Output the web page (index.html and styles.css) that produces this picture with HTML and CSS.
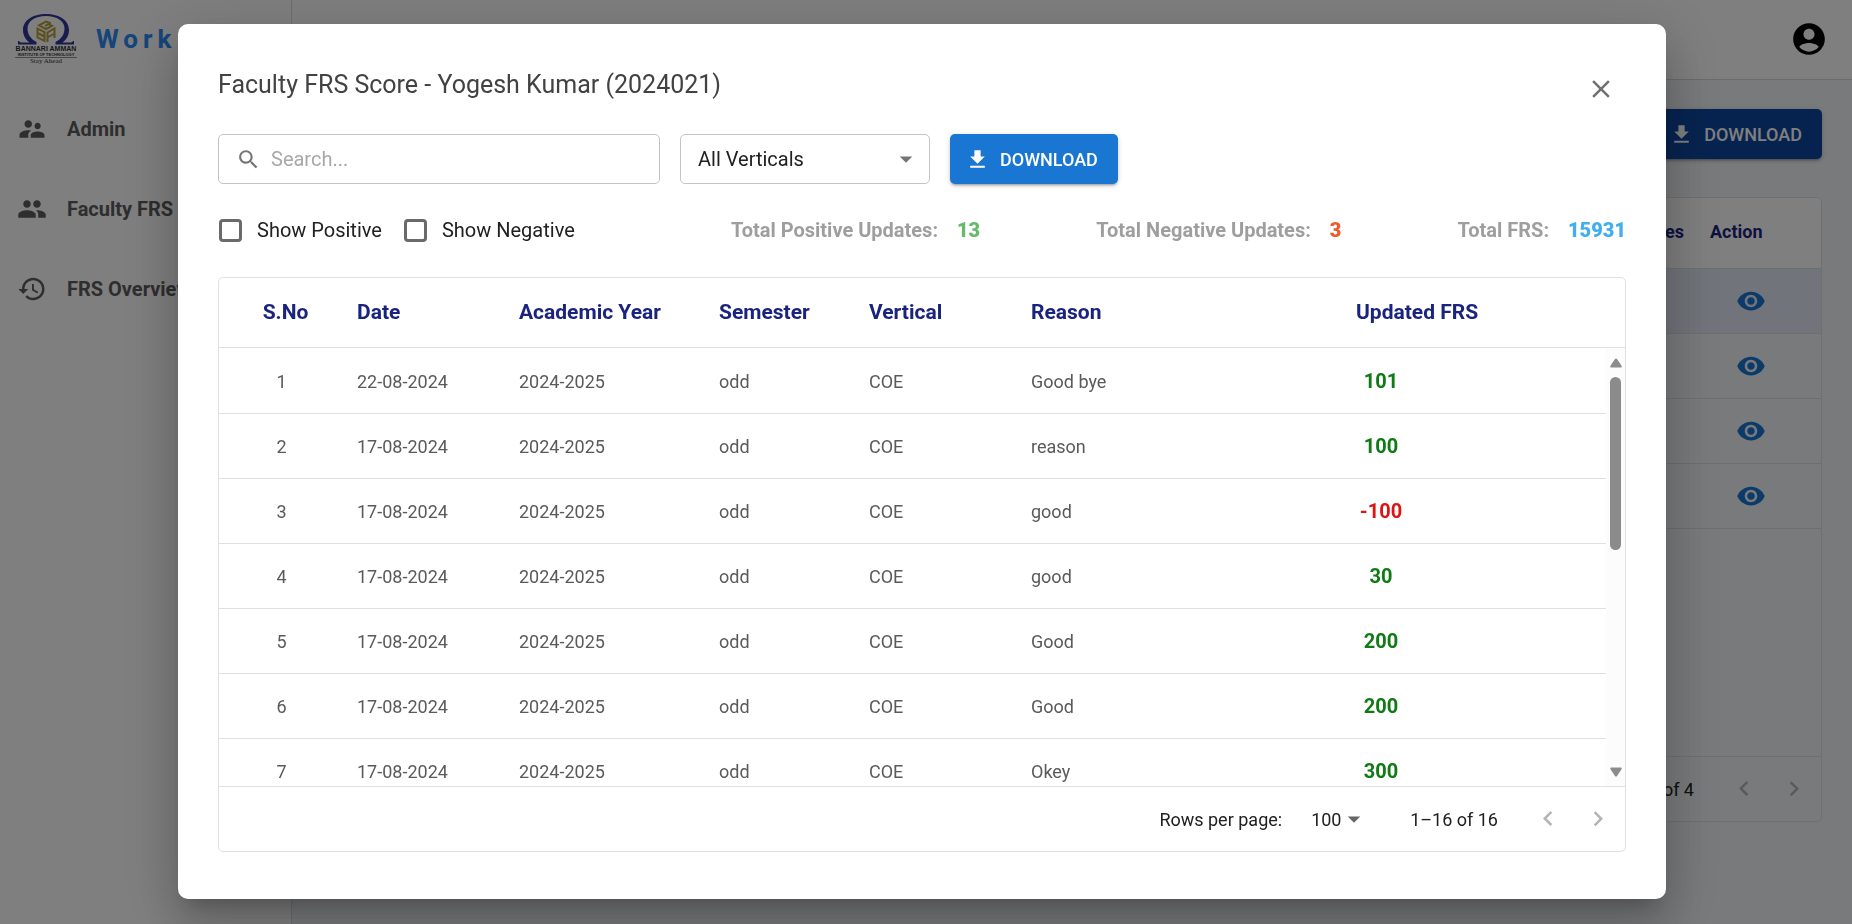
FILE: index.html
```html
<!DOCTYPE html>
<html lang="en">
<head>
<meta charset="utf-8">
<title>Faculty FRS</title>
<link rel="stylesheet" href="styles.css">
</head>
<body>
<svg class="defs" aria-hidden="true">
  <symbol id="i-download" viewBox="0 0 24 24"><path d="M19 9h-4V3H9v6H5l7 7 7-7zM5 18v2h14v-2H5z"/></symbol>
  <symbol id="i-eye" viewBox="0 0 24 24"><path d="M12 4.500C7 4.500 2.730 7.610 1 12c1.730 4.390 6 7.500 11 7.500s9.270-3.110 11-7.500c-1.730-4.390-6-7.500-11-7.500zM12 17c-2.760 0-5-2.240-5-5s2.240-5 5-5 5 2.240 5 5-2.240 5-5 5zm0-8c-1.660 0-3 1.340-3 3s1.340 3 3 3 3-1.340 3-3-1.340-3-3-3z"/></symbol>
  <symbol id="i-left" viewBox="0 0 24 24"><path d="M15.410 16.090l-4.580-4.590 4.580-4.590L14 5.500l-6 6 6 6z"/></symbol>
  <symbol id="i-right" viewBox="0 0 24 24"><path d="M8.590 16.340l4.580-4.590-4.580-4.590L10 5.750l6 6-6 6z"/></symbol>
  <symbol id="i-drop" viewBox="0 0 24 24"><path d="M7 10l5 5 5-5z"/></symbol>
</svg>

<div class="app">
  <aside class="sidebar">
    <div class="brand">
      <svg class="logo" viewBox="0 0 62 51" role="img" aria-label="Bannari Amman Institute of Technology">
        <path fill="#33369a" d="M3 27v3.500h18.500v-2.500C15.500 25 12.500 20 12.500 14.500 12.500 7 20 2 31 2s18.500 5 18.500 12.500C49.500 20 46.500 25 40.500 28v2.500H59V27h-1c-.500 1.300-1.500 1.500-4 1.500h-6.500c4.200-3 6.500-7.500 6.500-12.500C54 6.500 44.500 0 31 0S8 6.500 8 16c0 5 2.300 9.500 6.500 12.500H8c-2.500 0-3.500-.200-4-1.500z"/>
        <g fill="none" stroke="#b5a03c" stroke-width="2">
          <path d="M36 9.500L31 7.500l-7 3.800 7 3.700 6-3.200-3.500-1.800-3.500 1.800"/>
          <path d="M22.500 14.500v9l7 3.500v-9zM22.500 19l7 3.500"/>
          <path d="M32.500 28v-9.500l7-4V24M32.500 23.500l7-4"/>
        </g>
        <text class="logo-name" x="31" y="37" text-anchor="middle">BANNARI AMMAN</text>
        <text class="logo-sub" x="31" y="42" text-anchor="middle">INSTITUTE OF TECHNOLOGY</text>
        <path stroke="#222" stroke-width=".5" d="M0 43.500h62"/>
        <text class="logo-motto" x="31" y="49" text-anchor="middle">Stay Ahead</text>
      </svg>
      <span class="brand-name">Work</span>
    </div>
    <nav class="nav">
      <a href="#admin"><svg viewBox="0 0 24 24"><path d="M16.500 12c1.380 0 2.490-1.120 2.490-2.500S17.880 7 16.500 7C15.120 7 14 8.120 14 9.500s1.120 2.500 2.500 2.500zM9 11c1.660 0 2.990-1.340 2.990-3S10.660 5 9 5C7.340 5 6 6.340 6 8s1.340 3 3 3zm7.500 3c-1.830 0-5.500.920-5.500 2.750V19h11v-2.250c0-1.830-3.670-2.750-5.500-2.750zM9 13c-2.330 0-7 1.170-7 3.500V19h7v-2.250c0-.850.330-2.340 2.370-3.470C10.500 13.100 9.660 13 9 13z"/></svg>Admin</a>
      <a href="#faculty"><svg viewBox="0 0 24 24"><path d="M16 11c1.660 0 2.990-1.340 2.990-3S17.660 5 16 5c-1.660 0-3 1.340-3 3s1.340 3 3 3zm-8 0c1.660 0 2.990-1.340 2.990-3S9.660 5 8 5C6.340 5 5 6.340 5 8s1.340 3 3 3zm0 2c-2.330 0-7 1.170-7 3.500V19h14v-2.500c0-2.330-4.670-3.500-7-3.500zm8 0c-.290 0-.620.020-.970.050 1.160.840 1.970 1.970 1.970 3.450V19h6v-2.500c0-2.330-4.670-3.500-7-3.500z"/></svg>Faculty FRS</a>
      <a href="#overview"><svg viewBox="0 0 24 24"><path d="M13 3c-4.970 0-9 4.030-9 9H1l3.890 3.890.070.140L9 12H6c0-3.870 3.130-7 7-7s7 3.130 7 7-3.130 7-7 7c-1.930 0-3.680-.790-4.940-2.060l-1.420 1.420C8.270 19.990 10.510 21 13 21c4.970 0 9-4.030 9-9s-4.030-9-9-9zm-1 5v5l4.280 2.540.720-1.210-3.500-2.080V8H12z"/></svg>FRS Overview</a>
    </nav>
  </aside>
  <div class="page">
    <header class="topbar">
      <button class="account" aria-label="Account"><svg viewBox="0 0 24 24"><path d="M12 2C6.480 2 2 6.480 2 12s4.480 10 10 10 10-4.480 10-10S17.520 2 12 2zm0 3.500c1.930 0 3.500 1.570 3.500 3.500s-1.570 3.500-3.500 3.500S8.500 10.930 8.500 9 10.070 5.500 12 5.500zM12 20c-2.300 0-4.600-1.100-6.100-2.900C6 15.500 10 14.500 12 14.500s6 1 6.100 2.600C16.600 18.900 14.300 20 12 20z"/></svg></button>
    </header>
    <main class="main">
      <button class="btn btn-dark"><svg><use href="#i-download"/></svg>DOWNLOAD</button>
      <section class="card">
        <table class="back-table">
          <thead><tr><th>Scores</th><th class="act">Action</th></tr></thead>
          <tbody>
            <tr class="hovered"><td></td><td class="act"><button aria-label="View"><svg><use href="#i-eye"/></svg></button></td></tr>
            <tr><td></td><td class="act"><button aria-label="View"><svg><use href="#i-eye"/></svg></button></td></tr>
            <tr><td></td><td class="act"><button aria-label="View"><svg><use href="#i-eye"/></svg></button></td></tr>
            <tr><td></td><td class="act"><button aria-label="View"><svg><use href="#i-eye"/></svg></button></td></tr>
          </tbody>
        </table>
        <footer class="pager">
          <span class="range">1–4 of 4</span>
          <button aria-label="Previous page"><svg><use href="#i-left"/></svg></button>
          <button aria-label="Next page"><svg><use href="#i-right"/></svg></button>
        </footer>
      </section>
    </main>
  </div>
</div>

<div class="overlay">
  <div class="dialog" role="dialog" aria-labelledby="dlg-title">
    <div class="dialog-head">
      <h2 id="dlg-title">Faculty FRS Score - Yogesh Kumar (2024021)</h2>
      <button class="close" aria-label="Close"><svg viewBox="0 0 24 24"><path d="M19 6.410L17.590 5 12 10.590 6.410 5 5 6.410 10.590 12 5 17.590 6.410 19 12 13.410 17.590 19 19 17.590 13.410 12z"/></svg></button>
    </div>
    <div class="tools">
      <label class="search"><svg viewBox="0 0 24 24"><path d="M15.500 14h-.790l-.280-.270C15.410 12.590 16 11.110 16 9.500 16 5.910 13.090 3 9.500 3S3 5.910 3 9.500 5.910 16 9.500 16c1.610 0 3.090-.590 4.230-1.570l.270.280v.790l5 4.990L20.490 19l-4.990-5zm-6 0C7.010 14 5 11.990 5 9.500S7.010 5 9.500 5 14 7.010 14 9.500 11.990 14 9.500 14z"/></svg><input type="text" placeholder="Search..." aria-label="Search"></label>
      <div class="select"><select aria-label="Vertical"><option>All Verticals</option></select><svg><use href="#i-drop"/></svg></div>
      <button class="btn"><svg><use href="#i-download"/></svg>DOWNLOAD</button>
    </div>
    <div class="summary">
      <div class="checks">
        <label><input type="checkbox">Show Positive</label>
        <label><input type="checkbox">Show Negative</label>
      </div>
      <p>Total Positive Updates: <b class="c-green">13</b></p>
      <p>Total Negative Updates: <b class="c-orange">3</b></p>
      <p>Total FRS: <b class="c-blue">15931</b></p>
    </div>
    <div class="grid">
      <table class="records">
        <thead><tr><th>S.No</th><th>Date</th><th>Academic Year</th><th>Semester</th><th>Vertical</th><th>Reason</th><th>Updated FRS</th></tr></thead>
        <tbody>
          <tr><td>1</td><td>22-08-2024</td><td>2024-2025</td><td>odd</td><td>COE</td><td>Good bye</td><td><b class="plus">101</b></td></tr>
          <tr><td>2</td><td>17-08-2024</td><td>2024-2025</td><td>odd</td><td>COE</td><td>reason</td><td><b class="plus">100</b></td></tr>
          <tr><td>3</td><td>17-08-2024</td><td>2024-2025</td><td>odd</td><td>COE</td><td>good</td><td><b class="minus">-100</b></td></tr>
          <tr><td>4</td><td>17-08-2024</td><td>2024-2025</td><td>odd</td><td>COE</td><td>good</td><td><b class="plus">30</b></td></tr>
          <tr><td>5</td><td>17-08-2024</td><td>2024-2025</td><td>odd</td><td>COE</td><td>Good</td><td><b class="plus">200</b></td></tr>
          <tr><td>6</td><td>17-08-2024</td><td>2024-2025</td><td>odd</td><td>COE</td><td>Good</td><td><b class="plus">200</b></td></tr>
          <tr><td>7</td><td>17-08-2024</td><td>2024-2025</td><td>odd</td><td>COE</td><td>Okey</td><td><b class="plus">300</b></td></tr>
        </tbody>
      </table>
      <div class="scrollbar" aria-hidden="true">
        <svg viewBox="0 0 12 10"><path d="M6 0.500Q6.600 0.500 7 1L11.700 8Q12 9.500 11 9.500H1Q0 9.500 .300 8L5 1Q5.400 0.500 6 0.500z"/></svg>
        <i class="thumb"></i>
        <svg class="down" viewBox="0 0 12 10"><path d="M6 9.500Q6.600 9.500 7 9L11.700 2Q12 .500 11 .500H1Q0 .500 .300 2L5 9Q5.400 9.500 6 9.500z"/></svg>
      </div>
      <footer class="pager">
        <label for="rpp">Rows per page:</label>
        <div class="rpp"><select id="rpp"><option>100</option></select><svg><use href="#i-drop"/></svg></div>
        <span class="range">1–16 of 16</span>
        <button aria-label="Previous page"><svg><use href="#i-left"/></svg></button>
        <button aria-label="Next page"><svg><use href="#i-right"/></svg></button>
      </footer>
    </div>
  </div>
</div>
</body>
</html>
```
FILE: styles.css
```css
* { box-sizing: border-box; }
body { margin: 0; font-family: Roboto, "Liberation Sans", sans-serif; font-size: 18px; color: #212121; background: #fff; }
svg { display: block; fill: currentColor; flex: none; }
.defs { position: absolute; width: 0; height: 0; }
button { display: block; font: inherit; color: inherit; border: 0; background: none; padding: 0; cursor: pointer; }
select, input { font: inherit; color: inherit; }
h2, p { margin: 0; }

/* Page behind the dialog */
.app { display: flex; height: 100vh; overflow: hidden; }
.sidebar { width: 292px; flex: none; border-right: 1px solid #dcdcdc; background: #fff; }
.brand { display: flex; align-items: center; gap: 19px; height: 80px; padding: 0 0 2px 15px; }
.logo { width: 62px; height: 51px; }
.logo-name { font: bold 7px "Liberation Sans", sans-serif; fill: #333; }
.logo-sub { font: bold 4px "Liberation Sans", sans-serif; fill: #333; }
.logo-motto { font: 7px "Liberation Serif", serif; fill: #333; }
.brand-name { font-size: 26px; font-weight: 700; letter-spacing: 5px; color: #2a8af6; }
.nav { display: flex; flex-direction: column; gap: 20px; padding: 19px 0 0 17px; }
.nav a { display: flex; align-items: center; gap: 20px; height: 60px; font-size: 20px; font-weight: 700; color: #5c5c5c; text-decoration: none; white-space: nowrap; }
.nav svg { width: 30px; height: 30px; }
.page { flex: 1; display: flex; flex-direction: column; background: #f2f4f8; }
.topbar { height: 80px; display: flex; justify-content: flex-end; align-items: center; padding: 0 24px 2px 0; background: #fff; border-bottom: 1px solid #d5d8dd; }
.account { color: #000; }
.account svg { width: 38px; height: 38px; }
.main { flex: 1; display: flex; flex-direction: column; align-items: flex-end; gap: 38px; padding: 29px 30px 102px; }
.card { flex: 1; align-self: stretch; display: flex; flex-direction: column; border: 1px solid #e0e0e0; border-radius: 5px; background: #f3f5f8; overflow: hidden; }
.back-table { width: 100%; border-collapse: collapse; }
.back-table tr { height: 65px; border-bottom: 1px solid #dcdddf; }
.back-table thead tr { height: 70px; background: #fff; }
.back-table th { text-align: right; padding: 0 13px 2px; font-weight: 700; color: #1a237e; }
.back-table .act { width: 124px; text-align: left; }
.back-table td { padding: 0; }
.back-table td.act { padding-left: 39px; color: #1976d2; }
.back-table .hovered { background: #e2e9f5; }
.back-table svg { width: 30px; height: 30px; }
.card .pager { margin-top: auto; }

/* Buttons and paging */
.btn { display: flex; align-items: center; gap: 10px; height: 50px; padding: 0 20px 0 15px; border-radius: 5px; background: #1976d2; color: #fff; font-size: 18px; font-weight: 500; box-shadow: 0 3px 2px -2px rgba(0,0,0,.2), 0 2px 3px rgba(0,0,0,.14), 0 1px 6px rgba(0,0,0,.12); }
.btn svg { width: 25px; height: 25px; }
.btn-dark { background: #0d47a1; }
.pager { display: flex; align-items: center; justify-content: flex-end; height: 65px; padding-right: 12px; border-top: 1px solid #e0e0e0; }
.pager button { width: 30px; margin-right: 20px; color: #b4b4b4; }
.pager button:last-child { margin-right: 0; }
.pager button svg { width: 30px; height: 30px; }
.range { margin-right: 35px; }
.rpp { position: relative; margin: 0 45px 0 24px; }
.rpp select, .select select { appearance: none; border: 0; background: transparent; outline: 0; }
.rpp select { width: 59px; padding: 0 0 0 5px; }
.rpp svg { position: absolute; right: -4px; top: 50%; width: 30px; height: 30px; margin-top: -15px; color: #666; pointer-events: none; }

/* Dialog */
.overlay { position: fixed; inset: 0; display: flex; padding: 24px 186px 25px 178px; background: rgba(0,0,0,.5); }
.dialog { flex: 1; display: flex; flex-direction: column; padding: 40px 40px 47px; border-radius: 10px; background: #fff; box-shadow: 0 14px 19px -9px rgba(0,0,0,.2), 0 30px 48px 4px rgba(0,0,0,.14), 0 11px 58px 10px rgba(0,0,0,.12); }
.dialog-head { display: flex; justify-content: space-between; align-items: flex-start; }
.dialog-head h2 { font-size: 25px; line-height: 42px; font-weight: 400; color: #424242; }
.close { padding: 10px; color: #707070; }
.close svg { width: 30px; height: 30px; }
.tools { display: flex; gap: 20px; margin-top: 20px; font-size: 20px; }
.search { display: flex; align-items: center; gap: 10px; width: 442px; height: 50px; padding: 0 17px; border: 1px solid #c4c4c4; border-radius: 5px; }
.search svg { width: 25px; height: 25px; color: #757575; }
.search input { flex: 1; min-width: 0; border: 0; outline: 0; padding: 0; background: none; }
.search input::placeholder { color: #a8a8a8; opacity: 1; }
.select { position: relative; width: 250px; }
.select select { width: 100%; height: 50px; padding: 0 17px; border: 1px solid #c4c4c4; border-radius: 5px; }
.select svg { position: absolute; right: 9px; top: 10px; width: 30px; height: 30px; color: #757575; pointer-events: none; }
.summary { display: flex; align-items: center; justify-content: space-between; height: 52px; margin: 20px 0 21px; font-size: 20px; white-space: nowrap; }
.checks { display: flex; gap: 21px; padding-right: 40px; }
.checks label { display: flex; align-items: center; gap: 15px; padding-left: 1px; }
.checks input { appearance: none; width: 23px; height: 23px; margin: 0; border: 3px solid #6a6a6a; border-radius: 4px; }
.summary p { font-weight: 700; color: #9e9e9e; }
.summary b { margin-left: 14px; }
.c-green { color: #66bb6a; }
.c-orange { color: #f1592a; }
.c-blue { color: #42aeec; }

/* Records grid */
.grid { position: relative; flex: 1; min-height: 0; display: flex; flex-direction: column; border: 1px solid #e0e0e0; border-radius: 5px; }
.records { flex: 1; min-height: 0; display: flex; flex-direction: column; color: #5a5a5a; }
.records thead, .records tbody { display: block; }
.records tbody { flex: 1; min-height: 0; padding-top: 1px; overflow: hidden; }
.records tr { display: grid; grid-template-columns: 125fr 162fr 200fr 150fr 162fr 325fr 282fr; align-items: center; height: 65px; border-bottom: 1px solid #e0e0e0; }
.records thead tr { height: 70px; }
.records th { padding: 0 13px 2px; text-align: left; font-size: 21px; font-weight: 700; color: #1a237e; white-space: nowrap; }
.records th:first-child { padding: 0 5px 2px 13px; text-align: center; }
.records td { padding: 0 13px; }
.records td:first-child { text-align: center; }
.records td:last-child { padding: 0; }
.records b { display: block; width: 76px; text-align: center; font-size: 20px; }
.plus { color: #107a14; }
.minus { color: #dc1414; }
.scrollbar { position: absolute; top: 70px; right: 0; bottom: 65px; width: 19px; display: flex; flex-direction: column; align-items: center; padding: 10px 0 9px; background: #fcfcfc; color: #8b8b8b; }
.scrollbar svg { width: 12px; height: 10px; }
.thumb { width: 11px; height: 173px; margin-top: 9px; border-radius: 6px; background: #8b8b8b; }
.scrollbar .down { margin-top: auto; }
```
